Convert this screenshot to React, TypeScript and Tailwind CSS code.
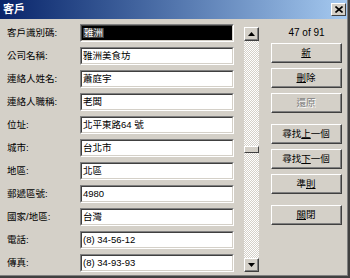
import React from 'react';

const font = { fontFamily: '"Liberation Sans", "Noto Sans CJK TC", sans-serif' };

interface Field {
  label: string;
  value: string;
}

const fields: Field[] = [
  { label: '客戶識別碼:', value: '雅洲' },
  { label: '公司名稱:', value: '雅洲美食坊' },
  { label: '連絡人姓名:', value: '蕭庭宇' },
  { label: '連絡人職稱:', value: '老闆' },
  { label: '位址:', value: '北平東路64 號' },
  { label: '城市:', value: '台北市' },
  { label: '地區:', value: '北區' },
  { label: '郵遞區號:', value: '4980' },
  { label: '國家/地區:', value: '台灣' },
  { label: '電話:', value: '(8) 34-56-12' },
  { label: '傳真:', value: '(8) 34-93-93' },
];

function TextBox({ value, selected }: { value: string; selected?: boolean }) {
  return (
    <div className="w-[154px] h-[18px] border-t border-l border-t-[#808080] border-l-[#808080] border-b border-r border-b-white border-r-white">
      <div
        className={`h-full border-t border-l border-t-[#404040] border-l-[#404040] border-b border-r border-b-[#d4d0c8] border-r-[#d4d0c8] flex items-center pl-[1px] text-[9.5px] leading-none ${
          selected ? 'bg-black' : 'bg-white text-black'
        }`}
      >
        {selected ? <span className="bg-[#3c3c3c] text-white px-[1px]">{value}</span> : value}
      </div>
    </div>
  );
}

function Button({
  children,
  mt,
  disabled,
}: {
  children: React.ReactNode;
  mt: string;
  disabled?: boolean;
}) {
  return (
    <div className={`${mt} w-[71px] h-[20px] border-t border-l border-t-white border-l-white border-b border-r border-b-[#404040] border-r-[#404040]`}>
      <div
        className={`h-full border-b border-r border-b-[#808080] border-r-[#808080] flex items-center justify-center text-[9.5px] leading-none ${
          disabled ? 'text-[#808080] [text-shadow:1px_1px_0_#fff]' : 'text-black'
        }`}
      >
        {children}
      </div>
    </div>
  );
}

function ScrollButton({ up }: { up?: boolean }) {
  return (
    <div className="w-[15px] h-[14px] bg-[#d4d0c8] border-t border-l border-t-white border-l-white border-b border-r border-b-[#404040] border-r-[#404040]">
      <div className="h-full border-b border-r border-b-[#808080] border-r-[#808080] flex items-center justify-center">
        <svg width="7" height="4" viewBox="0 0 7 4">
          {up ? <path d="M3.5 0 L7 4 L0 4 Z" fill="#000" /> : <path d="M0 0 L7 0 L3.5 4 Z" fill="#000" />}
        </svg>
      </div>
    </div>
  );
}

export default function App() {
  return (
    <div className="w-[350px] h-[278px] bg-[#d4d0c8] border-r-2 border-b-2 border-[#404040]" style={font}>
      <div className="h-full border-r border-b border-[#808080] flex flex-col">
        {/* Title bar */}
        <div className="h-[19px] flex items-center justify-between bg-gradient-to-r from-[#0a246a] to-[#a6caf0] pl-[3px] pr-[1px]">
          <span className="text-white font-bold text-[11px] leading-none">客戶</span>
          <div className="w-[15px] h-[13px] bg-[#d4d0c8] border-t border-l border-t-white border-l-white border-b border-r border-b-[#404040] border-r-[#404040] flex items-center justify-center">
            <svg width="8" height="7" viewBox="0 0 8 7">
              <path d="M0.5 0.5 L7.5 6.5 M7.5 0.5 L0.5 6.5" stroke="#000" strokeWidth="1.6" />
            </svg>
          </div>
        </div>

        {/* Body */}
        <div className="flex flex-1">
          {/* Fields */}
          <div className="flex flex-col gap-[5px] pt-[5px] pl-[7px]">
            {fields.map((f, i) => (
              <div key={f.label} className="flex items-center h-[18px]">
                <div className="w-[73px] text-[9.5px] leading-none text-black">{f.label}</div>
                <TextBox value={f.value} selected={i === 0} />
              </div>
            ))}
          </div>

          {/* Scrollbar */}
          <div className="ml-[10px] mt-[8px] w-[15px] h-[245px] flex flex-col bg-[repeating-conic-gradient(#ffffff_0_25%,#d4d0c8_0_50%)] bg-[length:2px_2px]">
            <ScrollButton up />
            <div className="flex-1 flex flex-col">
              <div className="h-[105px]" />
              <div className="w-[15px] h-[7px] bg-[#d4d0c8] border-t border-l border-t-white border-l-white border-b border-r border-b-[#404040] border-r-[#404040]" />
            </div>
            <ScrollButton />
          </div>

          {/* Right column */}
          <div className="ml-[12px] flex flex-col">
            <div className="mt-[7px] h-[14px] flex items-center justify-center text-[10px] leading-none text-black">
              47 of 91
            </div>
            <Button mt="mt-[3px]">
              <span className="underline">新</span>
            </Button>
            <Button mt="mt-[5px]">
              <span className="underline">刪</span>除
            </Button>
            <Button mt="mt-[5px]" disabled>
              還原
            </Button>
            <Button mt="mt-[11px]">
              尋找<span className="underline">上</span>一個
            </Button>
            <Button mt="mt-[5px]">
              尋找<span className="underline">下</span>一個
            </Button>
            <Button mt="mt-[5px]">
              準<span className="underline">則</span>
            </Button>
            <Button mt="mt-[11px]">
              <span className="underline">關</span>閉
            </Button>
          </div>
        </div>
      </div>
    </div>
  );
}
